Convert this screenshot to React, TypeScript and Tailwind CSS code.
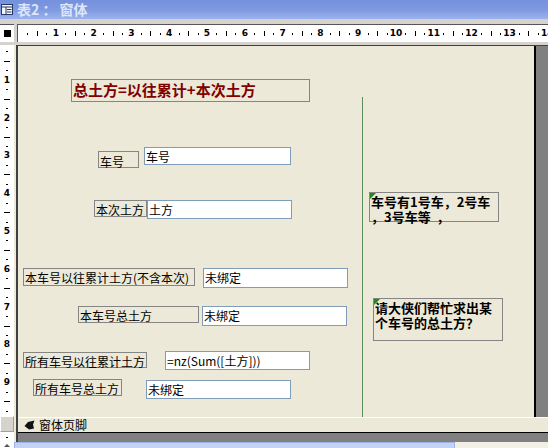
import React from 'react';

const CM = 37.8;

const hMarks = Array.from({ length: 15 }, (_, i) => i);
const vMarks = Array.from({ length: 10 }, (_, i) => i);

const TitleBar = () => (
    <div className="h-[19px] flex items-center gap-[4px] bg-gradient-to-b from-[#7591DD] via-[#7E99E1] to-[#9CB2EE]">
        <svg width="12" height="11" viewBox="0 0 12 11" className="ml-[1px]">
            <rect x="0.5" y="0.5" width="11" height="10" fill="#F4F6FB" stroke="#2A3A66" />
            <line x1="0.5" y1="3" x2="11.5" y2="3" stroke="#2A3A66" />
            <line x1="5" y1="3" x2="5" y2="10.5" stroke="#2A3A66" />
            <line x1="6" y1="5.5" x2="10.5" y2="5.5" stroke="#2A3A66" />
            <line x1="6" y1="8" x2="10.5" y2="8" stroke="#2A3A66" />
        </svg>
        <span className="text-[14px] leading-[19px] font-bold text-[#DDE6F8] whitespace-pre">表2 ： 窗体</span>
    </div>
);

const HRuler = () => (
    <div className="relative flex-1 h-full bg-white border-t border-l border-[#555555] overflow-hidden">
        {hMarks.map((i) => {
            const x = i * CM;
            return (
                <React.Fragment key={i}>
                    {i > 0 && (
                        <span
                            className="absolute top-[3px] -translate-x-1/2 text-[9px] leading-[10px] font-bold text-black font-['DejaVu_Sans',sans-serif]"
                            style={{ left: x }}
                        >
                            {i}
                        </span>
                    )}
                    <span className="absolute top-[8px] w-[1px] h-[2px] bg-black" style={{ left: x + CM / 4 }} />
                    <span className="absolute top-[6px] w-[1px] h-[5px] bg-black" style={{ left: x + CM / 2 }} />
                    <span className="absolute top-[8px] w-[1px] h-[2px] bg-black" style={{ left: x + (3 * CM) / 4 }} />
                </React.Fragment>
            );
        })}
    </div>
);

const VRuler = () => (
    <div className="relative flex-1 bg-white overflow-hidden">
        {vMarks.map((i) => {
            const y = -3 + i * CM;
            return (
                <React.Fragment key={i}>
                    {i > 0 && (
                        <span
                            className="absolute left-0 w-[14px] text-center -translate-y-1/2 text-[9px] leading-[10px] font-bold text-black font-['DejaVu_Sans',sans-serif]"
                            style={{ top: y }}
                        >
                            {i}
                        </span>
                    )}
                    <span className="absolute left-[6px] w-[2px] h-[1px] bg-black" style={{ top: y + CM / 4 }} />
                    <span className="absolute left-[4px] w-[6px] h-[1px] bg-black" style={{ top: y + CM / 2 }} />
                    <span className="absolute left-[6px] w-[2px] h-[1px] bg-black" style={{ top: y + (3 * CM) / 4 }} />
                </React.Fragment>
            );
        })}
    </div>
);

const Label = ({ className, children }: { className: string; children: React.ReactNode }) => (
    <div className={`absolute border border-[#858585] bg-[#ECE9D8] pl-[1px] pt-[1px] text-[12px] leading-[15px] text-black whitespace-nowrap ${className}`}>
        {children}
    </div>
);

const Field = ({ className, children }: { className: string; children: React.ReactNode }) => (
    <div className={`absolute border border-[#7F9DB9] bg-white pl-[1px] pt-[1px] text-[12px] leading-[15px] text-black whitespace-nowrap ${className}`}>
        {children}
    </div>
);

const Note = ({ className, children }: { className: string; children: React.ReactNode }) => (
    <div className={`absolute border border-[#858585] pl-[1px] pt-[1px] text-[13px] leading-[15px] font-bold text-black ${className}`}>
        <span className="absolute left-0 top-0 w-0 h-0 border-t-[6px] border-r-[6px] border-t-[#1E8A1E] border-r-transparent" />
        {children}
    </div>
);

const Canvas = () => (
    <div className="relative flex-1 bg-[#ECE9D8] overflow-hidden">
        <div className="absolute left-[53px] top-[33px] w-[239px] h-[23px] border border-[#858585] pl-[1px] pt-[1px] text-[15px] leading-[17px] font-bold text-[#800000] whitespace-nowrap">
            总土方=以往累计+本次土方
        </div>

        <Label className="left-[80px] top-[105px] w-[41px] h-[17px] pt-[2px]">车号</Label>
        <Field className="left-[126px] top-[101px] w-[147px] h-[18px]">车号</Field>

        <Label className="left-[76px] top-[154px] w-[53px] h-[17px]">本次土方</Label>
        <Field className="left-[129px] top-[154px] w-[145px] h-[19px]">土方</Field>

        <Label className="left-[5px] top-[222px] w-[172px] h-[18px]">本车号以往累计土方(不含本次)</Label>
        <Field className="left-[185px] top-[222px] w-[145px] h-[20px]">未绑定</Field>

        <Label className="left-[60px] top-[260px] w-[121px] h-[17px]">本车号总土方</Label>
        <Field className="left-[184px] top-[260px] w-[145px] h-[20px]">未绑定</Field>

        <Label className="left-[5px] top-[306px] w-[124px] h-[16px] leading-[14px]">所有车号以往累计土方</Label>
        <Field className="left-[147px] top-[305px] w-[145px] h-[19px] text-[11px]">=nz(Sum([土方]))</Field>

        <Label className="left-[15px] top-[333px] w-[89px] h-[17px]">所有车号总土方</Label>
        <Field className="left-[128px] top-[334px] w-[145px] h-[19px]">未绑定</Field>

        <div className="absolute left-[344px] top-[51px] bottom-0 w-[1px] bg-[#5B8F5B]" />

        <Note className="left-[351px] top-[146px] w-[130px] h-[30px]">
            车号有1号车，2号车
            <br />
            ，3号车等&nbsp;&nbsp;，
        </Note>
        <Note className="left-[355px] top-[252px] w-[130px] h-[43px]">
            请大侠们帮忙求出某
            <br />
            个车号的总土方？
        </Note>
    </div>
);

export default function App() {
    return (
        <div className="w-[548px] h-[448px] overflow-hidden bg-[#D6D3CE] flex flex-col font-['Noto_Sans_CJK_SC',sans-serif] select-none">
            <TitleBar />
            <div className="h-[5px]" />
            <div className="h-[18px] flex">
                <div className="w-[14px] h-full bg-white border-t border-[#555555] flex items-center justify-center">
                    <div className="w-[7px] h-[7px] bg-black" />
                </div>
                <div className="w-[3px]" />
                <HRuler />
            </div>
            <div className="h-[3px]" />
            <div className="flex flex-1 min-h-0">
                <div className="w-[14px] flex flex-col">
                    <VRuler />
                    <div className="h-[16px] bg-[#D6D3CE] border border-[#A0A0A0] border-t-white border-l-white" />
                    <div className="h-[10px] bg-white flex justify-center">
                        <span className="mt-[5px] w-[2px] h-[1px] bg-black" />
                    </div>
                </div>
                <div className="w-[2px] bg-[#ECE9D8]" />
                <div className="flex-1 flex flex-col border-l-2 border-[#404040]">
                    <div className="flex flex-1 border-t border-[#404040]">
                        <Canvas />
                        <div className="w-[14px] bg-[#808080] border-l-2 border-black" />
                    </div>
                    <div className="h-[15px] bg-[#ECE9D8] border-t border-white flex items-center gap-[4px] pl-[6px]">
                        <svg width="11" height="10" viewBox="0 0 11 10">
                            <path d="M0.5 6 L4 2 L10.5 0.5 L9 4.5 L10 8.5 L5 9.5 Z" fill="#111111" />
                        </svg>
                        <span className="text-[12px] leading-[14px] text-black">窗体页脚</span>
                    </div>
                    <div className="h-[10px] bg-[#808080] border-t border-black" />
                </div>
            </div>
            <div className="h-[6px] flex">
                <div className="w-[14px] bg-white flex justify-center">
                    <span className="mt-[2px] w-0 h-0 border-l-[3px] border-r-[3px] border-b-[3px] border-l-transparent border-r-transparent border-b-[#555555]" />
                </div>
                <div className="w-[441px] bg-[#C3D3F5] border-t border-l border-r border-[#9CB4E8]" />
                <div className="flex-1 bg-[#F1EFE6]" />
            </div>
        </div>
    );
}
